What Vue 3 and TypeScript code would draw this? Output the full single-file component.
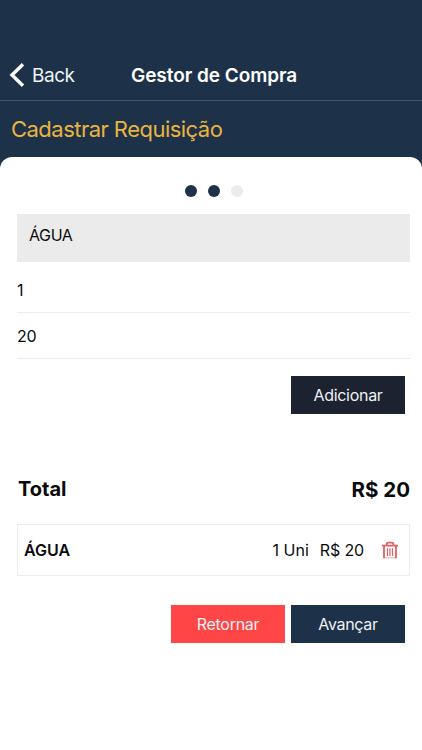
<script setup lang="ts">
import { ref, computed } from 'vue'

interface Item {
  name: string
  quantity: number
  price: number
}

const step = ref(2)
const product = ref('ÁGUA')
const quantity = ref(1)
const price = ref(20)
const items = ref<Item[]>([{ name: 'ÁGUA', quantity: 1, price: 20 }])
const total = computed(() => items.value.reduce((sum, item) => sum + item.quantity * item.price, 0))

function addItem() {
  items.value.push({ name: product.value, quantity: quantity.value, price: price.value })
}

function removeItem(index: number) {
  items.value.splice(index, 1)
}
</script>

<template>
  <div class="screen">
    <header class="navbar">
      <a class="back">
        <svg class="chevron" viewBox="0 0 16 26" width="16" height="26">
          <path d="M14 2.2 L3 13 L14 23.8" />
        </svg>
        <span class="back-label">Back</span>
      </a>
      <h1 class="nav-title">Gestor de Compra</h1>
      <span></span>
    </header>
    <h2 class="page-title"><span>Cadastrar Requisição</span></h2>
    <main class="panel">
      <div class="dots">
        <span v-for="n in 3" :key="n" class="dot" :class="{ active: n <= step }"></span>
      </div>
      <div class="select">{{ product }}</div>
      <div class="field">{{ quantity }}</div>
      <div class="field second">{{ price }}</div>
      <div class="actions add">
        <button class="btn dark" @click="addItem">Adicionar</button>
      </div>
      <div class="total">
        <span class="total-label">Total</span>
        <span class="total-value">R$ {{ total }}</span>
      </div>
      <div v-for="(item, i) in items" :key="i" class="item">
        <span class="item-name">{{ item.name }}</span>
        <span class="item-qty">{{ item.quantity }} Uni</span>
        <span class="item-price">R$ {{ item.price }}</span>
        <svg class="trash" viewBox="0 0 18 18" width="18" height="18" @click="removeItem(i)">
          <path class="lid" d="M1 4.6H17M5.6 4.2V3.2Q5.6 1.6 7.2 1.6H10.8Q12.4 1.6 12.4 3.2V4.2" />
          <path class="can" d="M3 5V17.2M15 5V17.2" />
          <path class="base" d="M3 16.8H15" />
          <path class="bars" d="M6.5 7.2V15M9 7.2V15M11.5 7.2V15" />
        </svg>
      </div>
      <div class="actions bottom">
        <button class="btn red">Retornar</button>
        <button class="btn navy">Avançar</button>
      </div>
    </main>
  </div>
</template>

<style>
body {
  background: #fff;
}
</style>

<style scoped>
.screen {
  height: 750px;
  display: flex;
  flex-direction: column;
  overflow: hidden;
  background: #1d3249;
  font-family: Inter, "Liberation Sans", sans-serif;
  color: #0b0b0d;
}
.navbar {
  box-sizing: border-box;
  height: 101px;
  padding: 50px 10px 0 9px;
  display: grid;
  grid-template-columns: 122px 180px 1fr;
  align-items: center;
  border-bottom: 1px solid #42556b;
  color: #fff;
}
.back {
  display: flex;
  align-items: center;
  gap: 7px;
}
.chevron path {
  fill: none;
  stroke: #fff;
  stroke-width: 3.4;
}
.back-label {
  font-size: 19px;
  letter-spacing: -0.45px;
  color: #eff2f5;
}
.nav-title {
  margin: 0;
  font-size: 19px;
  letter-spacing: -0.05px;
  font-weight: 600;
  white-space: nowrap;
}
.page-title {
  margin: 0;
  height: 56px;
  padding-left: 11px;
  display: flex;
  align-items: center;
  font-size: 22px;
  letter-spacing: -0.53px;
  font-weight: 400;
  color: #e9b43f;
}
.panel {
  flex: 1;
  padding: 28px 12px 0 17px;
  border-radius: 12px 12px 0 0;
  background: #fff;
}
.dots {
  display: flex;
  justify-content: center;
  gap: 11px;
  height: 29px;
  padding: 0 0 0 1px;
}
.dot {
  width: 12px;
  height: 12px;
  border-radius: 50%;
  background: #ececec;
}
.dot.active {
  background: #1d3249;
}
.select {
  box-sizing: border-box;
  width: 393px;
  height: 48px;
  padding: 0 12px 6px;
  display: flex;
  align-items: center;
  background: #ebebeb;
  font-size: 16px;
  letter-spacing: -0.4px;
}
.field {
  box-sizing: border-box;
  width: 393px;
  height: 51px;
  padding-top: 5px;
  display: flex;
  align-items: center;
  border-bottom: 1px solid #ececec;
  font-size: 16px;
  letter-spacing: -0.3px;
}
.field.second {
  height: 46px;
  padding-top: 0;
}
.actions {
  width: 388px;
  display: flex;
  justify-content: flex-end;
  gap: 6px;
}
.add {
  margin-top: 17px;
}
.bottom {
  margin-top: 29px;
}
.btn {
  width: 114px;
  height: 38px;
  padding: 0 0 1px;
  border: 0;
  font-family: inherit;
  font-size: 16px;
  letter-spacing: -0.3px;
  color: #eef1f5;
}
.dark {
  background: #1c2230;
}
.red {
  background: #ff4545;
}
.navy {
  background: #1d3249;
}
.total {
  box-sizing: border-box;
  width: 393px;
  height: 50px;
  margin-top: 50px;
  padding-left: 1px;
  display: flex;
  align-items: center;
  justify-content: space-between;
  font-size: 20px;
  font-weight: 700;
}
.total-value {
  font-size: 20.5px;
}
.item {
  box-sizing: border-box;
  width: 393px;
  height: 52px;
  margin-top: 10px;
  padding: 0 10px 0 6px;
  display: flex;
  align-items: center;
  border: 1px solid #ececec;
  font-size: 16px;
}
.item-name {
  flex: 1;
  font-weight: 600;
}
.item-qty {
  margin-right: 11px;
}
.item-price {
  margin-right: 17px;
  letter-spacing: -0.15px;
}
.trash path {
  fill: none;
  stroke: #df6065;
  stroke-width: 1.8;
}
.trash .base {
  stroke-width: 0.9;
  opacity: 0.6;
}
.trash .bars {
  stroke-width: 1.2;
}
</style>
